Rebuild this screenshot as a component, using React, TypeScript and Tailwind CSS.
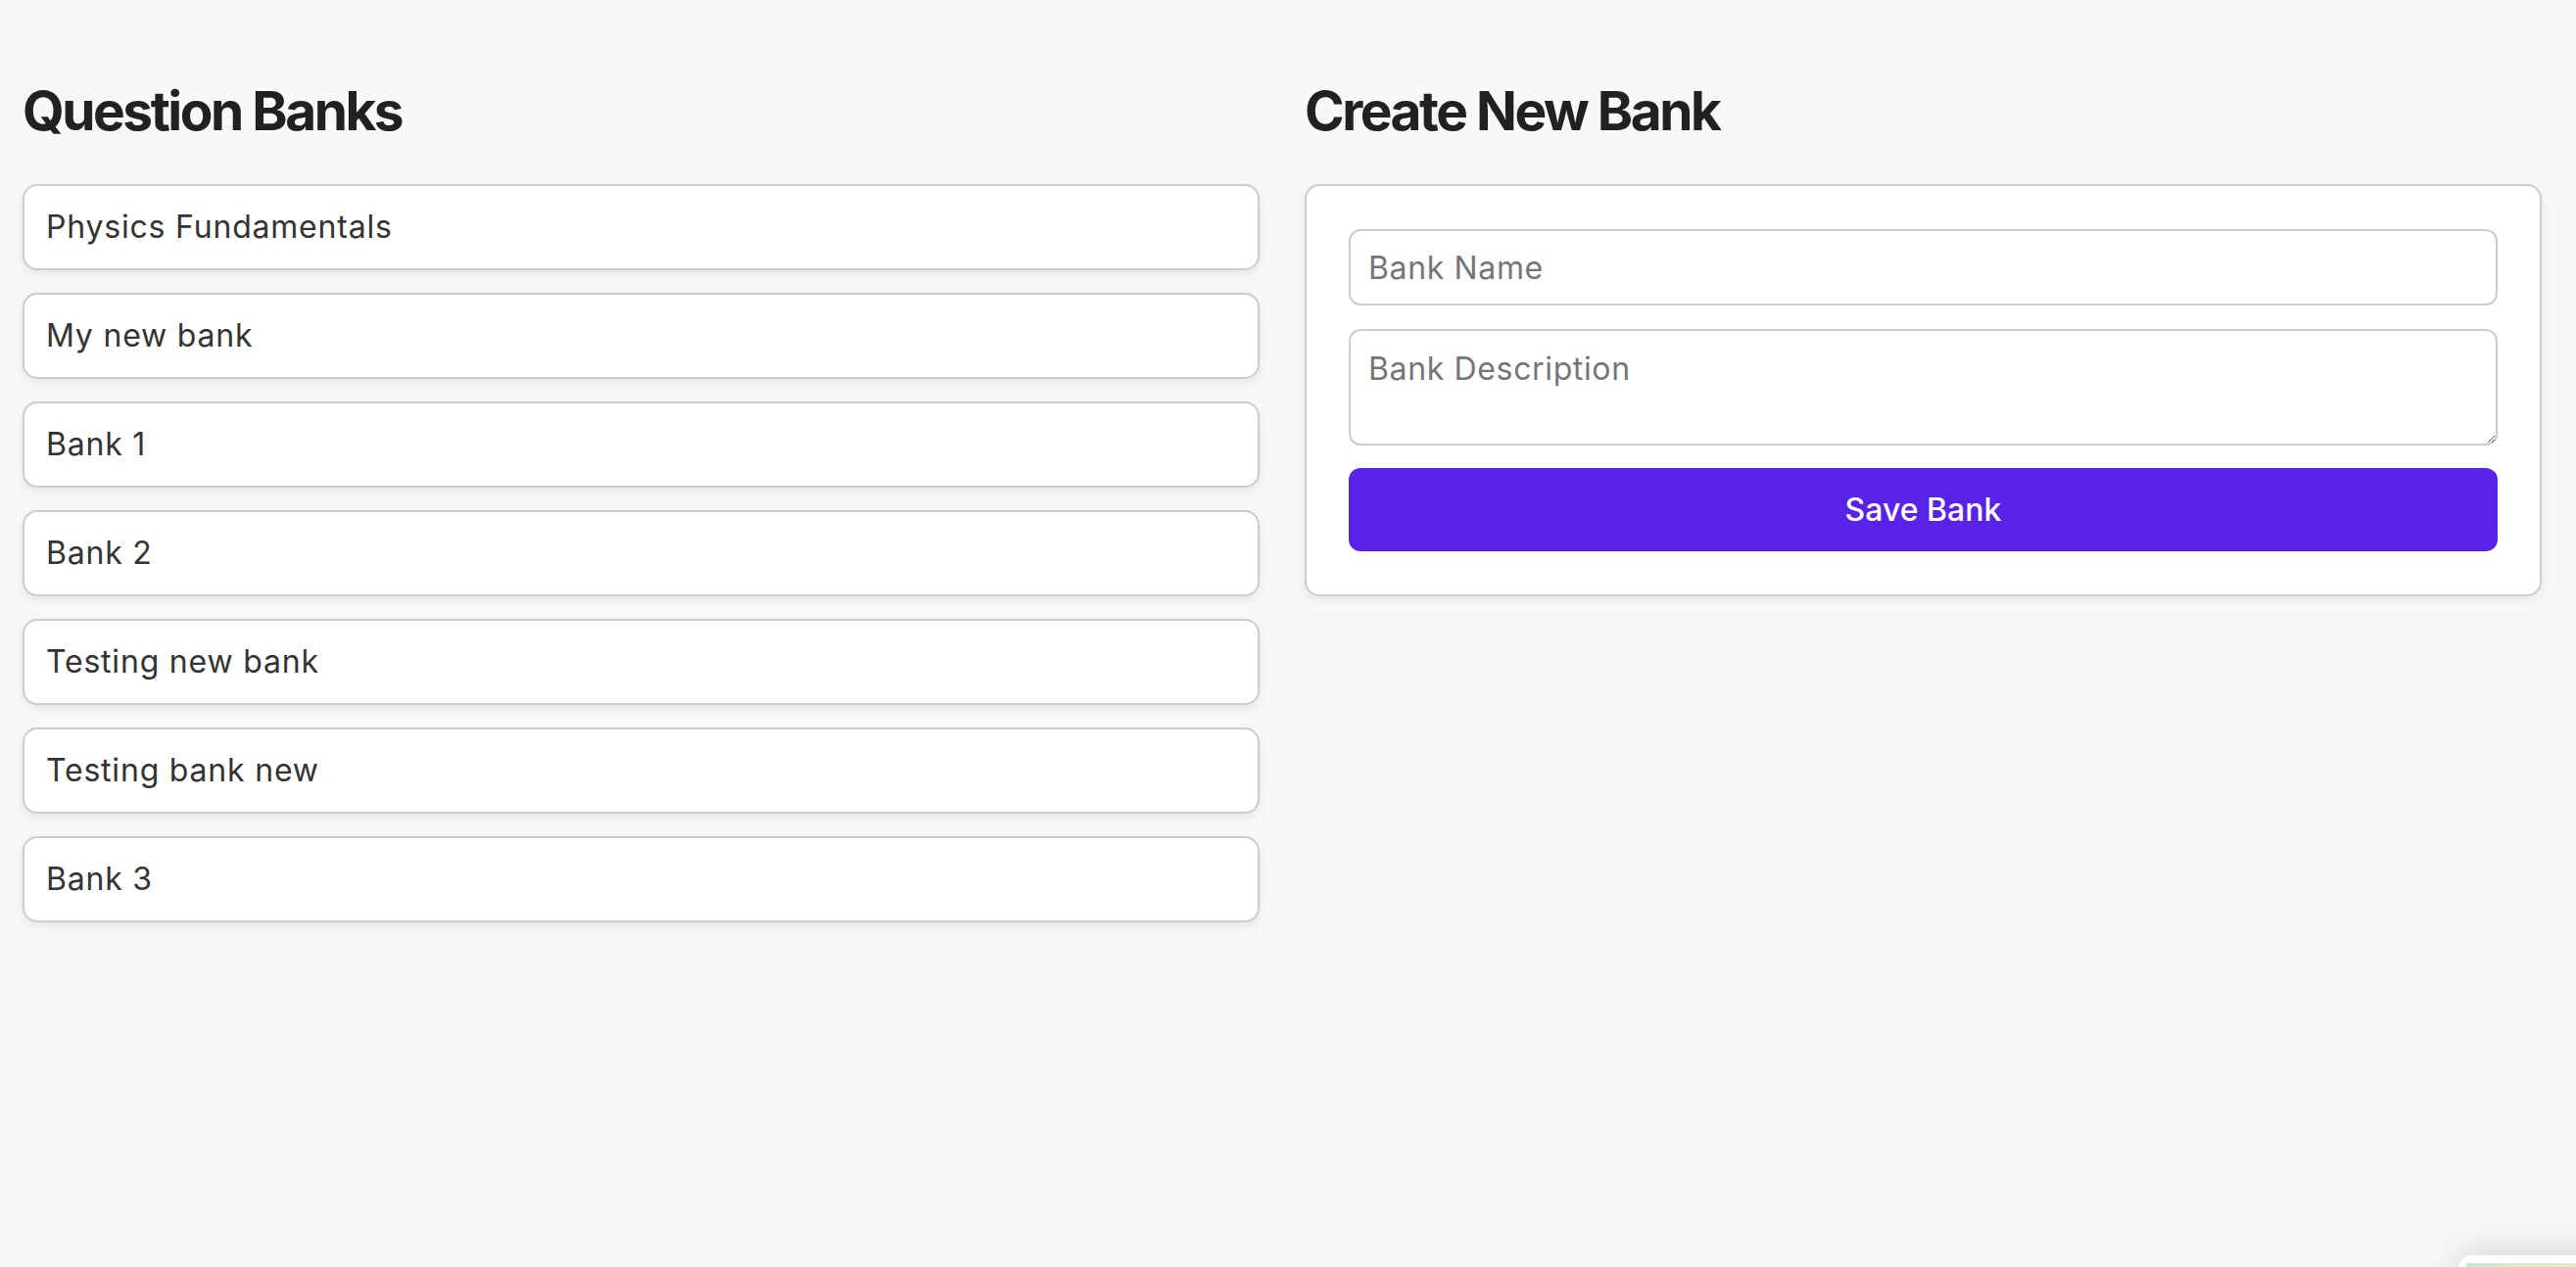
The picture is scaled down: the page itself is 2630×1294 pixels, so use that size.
import { useState } from 'react';

const banks = [
  'Physics Fundamentals',
  'My new bank',
  'Bank 1',
  'Bank 2',
  'Testing new bank',
  'Testing bank new',
  'Bank 3',
];

export default function App() {
  const [name, setName] = useState('');
  const [description, setDescription] = useState('');

  return (
    <div className="relative h-[1294px] overflow-hidden bg-[#f8f8f8] font-['Inter',sans-serif] text-[#333]">
      <div className="grid grid-cols-2 gap-[46px] pl-[23px] pr-[35px]">
        <section>
          <h2 className="pt-[80px] text-[55px] font-bold leading-[67px] tracking-[-0.045em] text-[#212121] mb-[41px]">Question Banks</h2>
          <ul className="space-y-[23px]">
            {banks.map((bank) => (
              <li
                key={bank}
                className="rounded-[15px] border-2 border-[#cccccc] bg-white px-[22px] py-[22px] text-[32px] leading-[40px] tracking-[0.025em] shadow-[0_4px_10px_rgba(0,0,0,0.08)]"
              >
                {bank}
              </li>
            ))}
          </ul>
        </section>

        <section>
          <h2 className="pt-[80px] text-[55px] font-bold leading-[67px] tracking-[-0.045em] text-[#212121] mb-[41px]">Create New Bank</h2>
          <div className="rounded-[15px] border-2 border-[#cccccc] bg-white px-[43px] py-[44px] shadow-[0_4px_12px_rgba(0,0,0,0.08)]">
            <input
              type="text"
              value={name}
              onChange={(e) => setName(e.target.value)}
              placeholder="Bank Name"
              className="block h-[78px] w-full rounded-[12px] border-2 border-[#cccccc] px-[18px] text-[32px] tracking-[0.02em] placeholder:text-[#757575] focus:outline-none"
            />
            <textarea
              value={description}
              onChange={(e) => setDescription(e.target.value)}
              placeholder="Bank Description"
              className="mt-[24px] block h-[119px] w-full rounded-[12px] border-2 border-[#cccccc] px-[18px] pt-[19px] pb-[10px] text-[32px] leading-[40px] tracking-[0.02em] placeholder:text-[#757575] focus:outline-none"
            />
            <button
              type="button"
              className="mt-[23px] block h-[85px] w-full rounded-[12px] bg-[#5823e6] text-[32px] font-medium text-white"
            >
              Save Bank
            </button>
          </div>
        </section>
      </div>

      {/* screenshot preview thumbnail */}
      <div className="absolute left-[2510px] top-[1282px] h-[60px] w-[200px] rounded-[14px] bg-white shadow-[0_0_40px_rgba(0,0,0,0.18)]">
        <div className="ml-[8px] mt-[8px] h-[8px] w-[120px] bg-gradient-to-r from-[#cfe3d6] via-[#dfe8cf] to-[#efe6c4]" />
      </div>
    </div>
  );
}
